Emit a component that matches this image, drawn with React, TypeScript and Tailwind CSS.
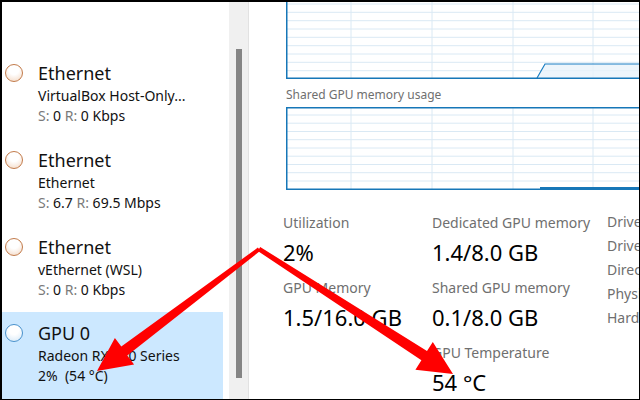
import React from 'react';

const font = { fontFamily: '"Noto Sans", "Open Sans", sans-serif' };

type Item = {
  title: string;
  sub: string;
  stats: React.ReactNode;
  kind: 'net' | 'gpu';
  selected?: boolean;
};

const Gray = ({ children }: { children: React.ReactNode }) => (
  <span className="text-[#7a7a7a]">{children}</span>
);

const items: Item[] = [
  {
    title: 'Ethernet',
    sub: 'VirtualBox Host-Only...',
    kind: 'net',
    stats: (
      <>
        <Gray>S:</Gray> 0 <Gray>R:</Gray> 0 Kbps
      </>
    ),
  },
  {
    title: 'Ethernet',
    sub: 'Ethernet',
    kind: 'net',
    stats: (
      <>
        <Gray>S:</Gray> 6.7 <Gray>R:</Gray> 69.5 Mbps
      </>
    ),
  },
  {
    title: 'Ethernet',
    sub: 'vEthernet (WSL)',
    kind: 'net',
    stats: (
      <>
        <Gray>S:</Gray> 0 <Gray>R:</Gray> 0 Kbps
      </>
    ),
  },
  {
    title: 'GPU 0',
    sub: 'Radeon RX 580 Series',
    kind: 'gpu',
    selected: true,
    stats: <>2%&nbsp; (54 °C)</>,
  },
];

function SideItem({ item }: { item: Item }) {
  return (
    <div
      className={`flex h-[87px] w-[221px] pl-[3px] pt-[9px] ${item.selected ? 'bg-[#cce8ff]' : ''}`}
    >
      <div
        className={
          item.kind === 'net'
            ? 'mt-[3px] h-[18px] w-[18px] shrink-0 rounded-full border-[1.5px] border-[#c27b4b] bg-[radial-gradient(circle_at_50%_30%,#ffffff_35%,#f3d6c0_100%)]'
            : 'mt-[3px] h-[18px] w-[18px] shrink-0 rounded-full border-[1.5px] border-[#4a92cc] bg-[radial-gradient(circle_at_50%_30%,#ffffff_35%,#d3e7f7_100%)]'
        }
      />
      <div className="ml-[15px] flex flex-col whitespace-nowrap text-[#111]">
        <div className="text-[18px] leading-[24px]">{item.title}</div>
        <div className="text-[14px] leading-[21px]">{item.sub}</div>
        <div className="text-[14px] leading-[20px]">{item.stats}</div>
      </div>
    </div>
  );
}

const vLines = [65, 146, 227, 307];

function TopChart() {
  const h = [2, 10.3, 18.7, 27, 35.3, 43.7, 52, 60.3, 68.7];
  return (
    <svg width="360" height="77" className="block shrink-0">
      {h.map((y) => (
        <line key={y} x1="0" x2="360" y1={y} y2={y} stroke="#dae9f4" strokeWidth="1" />
      ))}
      {vLines.map((x) => (
        <line key={x} x1={x} x2={x} y1="0" y2="77" stroke="#dae9f4" strokeWidth="1" />
      ))}
      <polygon points="251,76 259,62 360,62 360,76" fill="#e9f2fa" fillOpacity="0.8" />
      <polyline points="251,76 259,62 360,62" fill="none" stroke="#1b7fc3" strokeWidth="1.2" />
      <line x1="0.75" x2="0.75" y1="0" y2="77" stroke="#1677b8" strokeWidth="1.5" />
      <line x1="0" x2="360" y1="76.25" y2="76.25" stroke="#1677b8" strokeWidth="1.5" />
    </svg>
  );
}

function BottomChart() {
  const h = [8, 16.2, 24.5, 32.7, 41, 49.2, 57.5, 65.7, 74];
  return (
    <svg width="360" height="83" className="block shrink-0">
      {h.map((y) => (
        <line key={y} x1="0" x2="360" y1={y} y2={y} stroke="#dae9f4" strokeWidth="1" />
      ))}
      {vLines.map((x) => (
        <line key={x} x1={x} x2={x} y1="0" y2="83" stroke="#dae9f4" strokeWidth="1" />
      ))}
      <rect x="254" y="80" width="106" height="2.5" fill="#1677b8" />
      <rect x="0.75" y="0.75" width="400" height="81.5" fill="none" stroke="#1677b8" strokeWidth="1.5" />
    </svg>
  );
}

function Stat({ label, value }: { label: string; value: string }) {
  return (
    <div className="mb-[11px] flex flex-col">
      <div className="text-[14px] leading-[20px] text-[#6f6f6f]">{label}</div>
      <div className="mt-[4px] whitespace-nowrap text-[22px] leading-[30px] text-black">{value}</div>
    </div>
  );
}

function Arrows() {
  return (
    <svg className="pointer-events-none absolute inset-0" width="640" height="400">
      <polygon
        points="258.3,248.8 125.3,353.5 132.1,362.6 95,369 112.9,335.9 119.3,344.4 255.9,245.6"
        fill="#ff0000"
      />
      <polygon
        points="255.8,249.0 419.4,358.3 413.4,367.7 451,372 430.8,340.1 425.0,349.1 258.2,245.0"
        fill="#ff0000"
      />
    </svg>
  );
}

export default function App() {
  return (
    <div
      className="relative h-[400px] w-[640px] overflow-hidden border-b border-l-2 border-r border-t-2 border-black bg-white"
      style={font}
    >
      <div className="flex h-full">
        {/* left list */}
        <div className="flex w-[227px] shrink-0 flex-col pt-[50px]">
          {items.map((it, i) => (
            <SideItem key={i} item={it} />
          ))}
        </div>

        {/* scrollbar */}
        <div className="flex w-[20px] shrink-0 border-r border-[#e2e2e2] bg-[#f0f0f0] pl-[7px] pt-[47px]">
          <div className="h-[329px] w-[6px] bg-[#858585]" />
        </div>

        {/* right content */}
        <div className="flex min-w-0 flex-1 flex-col overflow-hidden">
          <div className="flex flex-col pl-[37px]">
            <TopChart />
            <div className="mt-[8px] text-[12px] leading-[16px] text-[#6f6f6f]">Shared GPU memory usage</div>
            <div className="mt-[4px]">
              <BottomChart />
            </div>
          </div>

          <div className="mt-[23px] flex pl-[34px]">
            <div className="flex w-[149px] shrink-0 flex-col">
              <Stat label="Utilization" value="2%" />
              <Stat label="GPU Memory" value="1.5/16.0 GB" />
            </div>
            <div className="flex w-[175px] shrink-0 flex-col">
              <Stat label="Dedicated GPU memory" value="1.4/8.0 GB" />
              <Stat label="Shared GPU memory" value="0.1/8.0 GB" />
              <Stat label="GPU Temperature" value="54 °C" />
            </div>
            <div className="-mt-[3px] flex flex-col whitespace-nowrap text-[14px] leading-[24px] text-[#6f6f6f]">
              <div>Driver version:</div>
              <div>Driver date:</div>
              <div>DirectX version:</div>
              <div>Physical location:</div>
              <div>Hardware reserved memory:</div>
            </div>
          </div>
        </div>
      </div>
      <Arrows />
    </div>
  );
}
